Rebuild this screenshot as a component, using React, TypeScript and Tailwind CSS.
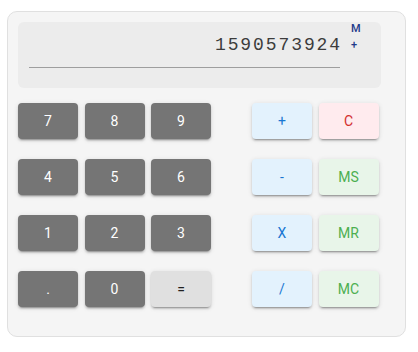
import React from "react";

type Key = { label: string; cls: string };

const dark = "bg-[#757575] text-white";
const light = "bg-[#e0e0e0] text-[#212121]";
const blue = "bg-[#e3f2fd] text-[#1976d2]";
const red = "bg-[#ffebee] text-[#d32f2f]";
const green = "bg-[#e8f5e9] text-[#4caf50]";

const rows: { left: Key[]; right: Key[] }[] = [
  {
    left: [
      { label: "7", cls: dark },
      { label: "8", cls: dark },
      { label: "9", cls: dark },
    ],
    right: [
      { label: "+", cls: blue },
      { label: "C", cls: red },
    ],
  },
  {
    left: [
      { label: "4", cls: dark },
      { label: "5", cls: dark },
      { label: "6", cls: dark },
    ],
    right: [
      { label: "-", cls: blue },
      { label: "MS", cls: green },
    ],
  },
  {
    left: [
      { label: "1", cls: dark },
      { label: "2", cls: dark },
      { label: "3", cls: dark },
    ],
    right: [
      { label: "X", cls: blue },
      { label: "MR", cls: green },
    ],
  },
  {
    left: [
      { label: ".", cls: dark },
      { label: "0", cls: dark },
      { label: "=", cls: light },
    ],
    right: [
      { label: "/", cls: blue },
      { label: "MC", cls: green },
    ],
  },
];

const KeyButton: React.FC<{ k: Key }> = ({ k }) => (
  <button
    className={`w-[60px] h-[36px] rounded-[4px] flex items-center justify-center text-[14px] font-normal font-['Roboto',sans-serif] shadow-[0px_3px_1px_-2px_rgba(0,0,0,0.2),0px_2px_2px_0px_rgba(0,0,0,0.14),0px_1px_5px_0px_rgba(0,0,0,0.12)] ${k.cls}`}
  >
    {k.label}
  </button>
);

export default function App() {
  return (
    <div className="w-[418px] h-[352px] bg-white pt-[11px] pl-[7px]">
      <div className="w-[399px] h-[326px] border border-[#e0e0e0] rounded-[10px] bg-[#f5f5f5] p-[10px]">
        <div className="w-[363px] h-[66px] rounded-[6px] bg-[#ececec] flex">
          <div className="w-[322px] pl-[11px] pt-[11px] flex flex-col">
            <div className="text-right text-[18px] leading-[24px] tracking-[1.9px] text-[#3c3c3c] font-['Liberation_Mono',monospace] -mr-[2px]">
              1590573924
            </div>
            <div className="mt-[10px] h-px bg-[#9e9e9e]" />
          </div>
          <div className="pl-[11px] pt-[1px] flex flex-col text-[11px] font-medium text-[#1e3a8a] font-['Roboto',sans-serif]">
            <span className="leading-[12px]">M</span>
            <span className="leading-[12px] mt-[4px]">+</span>
          </div>
        </div>
        <div className="mt-[15px] flex flex-col gap-[20px]">
          {rows.map((row, i) => (
            <div key={i} className="flex">
              <div className="flex gap-[6.5px]">
                {row.left.map((k) => (
                  <KeyButton key={k.label} k={k} />
                ))}
              </div>
              <div className="flex gap-[6.5px] ml-[41px]">
                {row.right.map((k) => (
                  <KeyButton key={k.label} k={k} />
                ))}
              </div>
            </div>
          ))}
        </div>
      </div>
    </div>
  );
}
